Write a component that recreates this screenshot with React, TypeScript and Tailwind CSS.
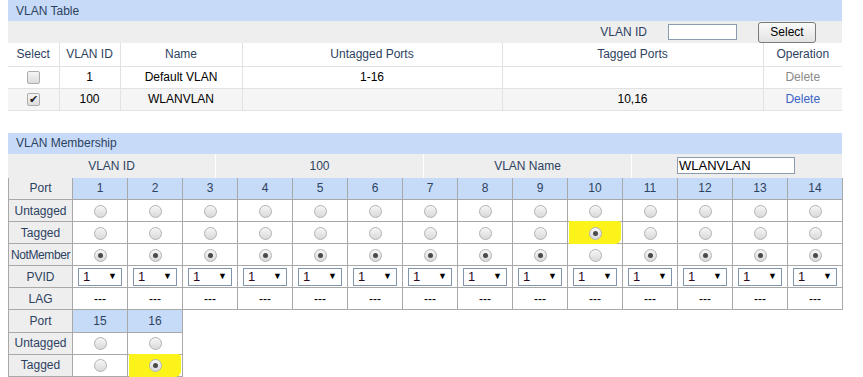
import React from "react";

const ports = Array.from({ length: 14 }, (_, i) => i + 1);

function Radio({ checked }: { checked?: boolean }) {
  return (
    <span className="inline-flex items-center justify-center w-[13px] h-[13px] rounded-full border border-[#b3b3b3] bg-gradient-to-b from-[#f6f6f6] to-[#d9d9d9] align-middle">
      {checked && <span className="w-[5px] h-[5px] rounded-full bg-[#4a4a4a]" />}
    </span>
  );
}

function Check({ checked }: { checked?: boolean }) {
  return (
    <span className="inline-flex items-center justify-center w-[13px] h-[13px] rounded-[2px] border border-[#adadad] bg-gradient-to-b from-[#f6f6f6] to-[#dcdcdc] align-middle text-[11px] leading-none text-[#222]">
      {checked ? "✔" : ""}
    </span>
  );
}

function Pvid() {
  return (
    <div className="mx-auto flex items-center justify-between w-[44px] h-[18px] border border-[#8195ab] bg-white px-[4px] text-[13px] leading-none">
      <span className="text-[#2a0a1c]">1</span>
      <span className="text-[9px] text-black">▼</span>
    </div>
  );
}

function Hl({ children }: { children: React.ReactNode }) {
  return (
    <div className="relative flex items-center justify-center h-full">
      <span className="absolute inset-x-[1px] -top-[1px] -bottom-[1px] bg-[#fbf31a] rounded-br-[6px] rounded-tr-[3px]" />
      <span className="relative">{children}</span>
    </div>
  );
}

const lbl = "w-[64px] bg-[#eeeeee] border border-[#a8a8a8] text-center text-[#2d4261] h-[22px] p-0";
const cell = "w-[55px] border border-[#a8a8a8] text-center h-[22px] p-0";
const head = "w-[55px] border border-[#a8a8a8] bg-[#c6dbf7] text-center text-[#2d4261] h-[22px] p-0";

export default function App() {
  return (
    <div className="w-[863px] h-[377px] bg-white overflow-hidden font-['Liberation_Sans',Arial,sans-serif] text-[12px] text-black">
      <div className="ml-[8px] w-[834px]">
        {/* VLAN Table */}
        <div className="h-[21px] bg-[#c7dbf8] pl-[8px] flex items-center text-[#2d4261]">VLAN Table</div>
        <div className="h-[22px] bg-[#eeeeee] flex items-center justify-end pr-[26px]">
          <span className="text-[#2d4261] mr-[21px]">VLAN ID</span>
          <span className="w-[69px] h-[16px] border border-[#8a9bb0] bg-white mr-[21px]" />
          <button className="w-[58px] h-[21px] border border-[#7a7a7a] rounded-[3px] bg-gradient-to-b from-[#fafafa] to-[#e3e3e3] text-[12px]">
            Select
          </button>
        </div>
        <table className="table-fixed border-collapse w-[834px]">
          <colgroup>
            <col className="w-[51px]" />
            <col className="w-[61px]" />
            <col className="w-[122px]" />
            <col className="w-[260px]" />
            <col className="w-[261px]" />
            <col className="w-[79px]" />
          </colgroup>
          <thead>
            <tr className="h-[23px] text-[#2d4261]">
              {["Select", "VLAN ID", "Name", "Untagged Ports", "Tagged Ports", "Operation"].map((h, i) => (
                <th key={h} className={`font-normal p-0 border-b border-[#e2e2e2] ${i > 0 ? "border-l border-[#e2e2e2]" : ""}`}>
                  {h}
                </th>
              ))}
            </tr>
          </thead>
          <tbody>
            <tr className="h-[22px] bg-white">
              <td className="text-center p-0 border-b border-[#e2e2e2]"><Check /></td>
              <td className="text-center p-0 border-b border-l border-[#e2e2e2]">1</td>
              <td className="text-center p-0 border-b border-l border-[#e2e2e2]">Default VLAN</td>
              <td className="text-center p-0 border-b border-l border-[#e2e2e2]">1-16</td>
              <td className="text-center p-0 border-b border-l border-[#e2e2e2]"></td>
              <td className="text-center p-0 border-b border-l border-[#e2e2e2] text-[#8a8a8a]">Delete</td>
            </tr>
            <tr className="h-[22px] bg-[#f5f5f5]">
              <td className="text-center p-0 border-b border-[#e2e2e2]"><Check checked /></td>
              <td className="text-center p-0 border-b border-l border-[#e2e2e2]">100</td>
              <td className="text-center p-0 border-b border-l border-[#e2e2e2]">WLANVLAN</td>
              <td className="text-center p-0 border-b border-l border-[#e2e2e2]"></td>
              <td className="text-center p-0 border-b border-l border-[#e2e2e2]">10,16</td>
              <td className="text-center p-0 border-b border-l border-[#e2e2e2] text-[#3a63c8]">Delete</td>
            </tr>
          </tbody>
        </table>

        {/* VLAN Membership */}
        <div className="mt-[22px] h-[21px] bg-[#c7dbf8] pl-[8px] flex items-center text-[#2d4261]">VLAN Membership</div>
        <div className="h-[24px] bg-[#eeeeee] grid grid-cols-[208px_208px_208px_210px] text-[#2d4261]">
          <div className="flex items-center justify-center border-r border-white">VLAN ID</div>
          <div className="flex items-center justify-center border-r border-white">100</div>
          <div className="flex items-center justify-center border-r border-white">VLAN Name</div>
          <div className="flex items-center pl-[45px]">
            <span className="w-[118px] h-[17px] border border-[#8a9bb0] bg-white text-black text-[13px] leading-[15px] pl-[1px]">WLANVLAN</span>
          </div>
        </div>
        <table className="table-fixed border-collapse w-[834px]">
          <tbody>
            <tr>
              <td className={`${lbl} bg-[#c6dbf7] border-t-0`}>Port</td>
              {ports.map((p) => <td key={p} className={`${head} border-t-0`}>{p}</td>)}
            </tr>
            <tr>
              <td className={lbl}>Untagged</td>
              {ports.map((p) => <td key={p} className={cell}><Radio /></td>)}
            </tr>
            <tr>
              <td className={lbl}>Tagged</td>
              {ports.map((p) => (
                <td key={p} className={cell}>{p === 10 ? <Hl><Radio checked /></Hl> : <Radio />}</td>
              ))}
            </tr>
            <tr>
              <td className={`${lbl} tracking-[-0.4px] whitespace-nowrap`}>NotMember</td>
              {ports.map((p) => <td key={p} className={cell}><Radio checked={p !== 10} /></td>)}
            </tr>
            <tr>
              <td className={lbl}>PVID</td>
              {ports.map((p) => <td key={p} className={cell}><Pvid /></td>)}
            </tr>
            <tr>
              <td className={lbl}>LAG</td>
              {ports.map((p) => <td key={p} className={cell}>---</td>)}
            </tr>
          </tbody>
        </table>
        <table className="table-fixed border-collapse w-[174px]">
          <tbody>
            <tr>
              <td className={`${lbl} bg-[#c6dbf7] border-t-0`}>Port</td>
              <td className={`${head} border-t-0`}>15</td>
              <td className={`${head} border-t-0`}>16</td>
            </tr>
            <tr>
              <td className={lbl}>Untagged</td>
              <td className={cell}><Radio /></td>
              <td className={cell}><Radio /></td>
            </tr>
            <tr>
              <td className={lbl}>Tagged</td>
              <td className={cell}><Radio /></td>
              <td className={cell}><Hl><Radio checked /></Hl></td>
            </tr>
          </tbody>
        </table>
      </div>
    </div>
  );
}
